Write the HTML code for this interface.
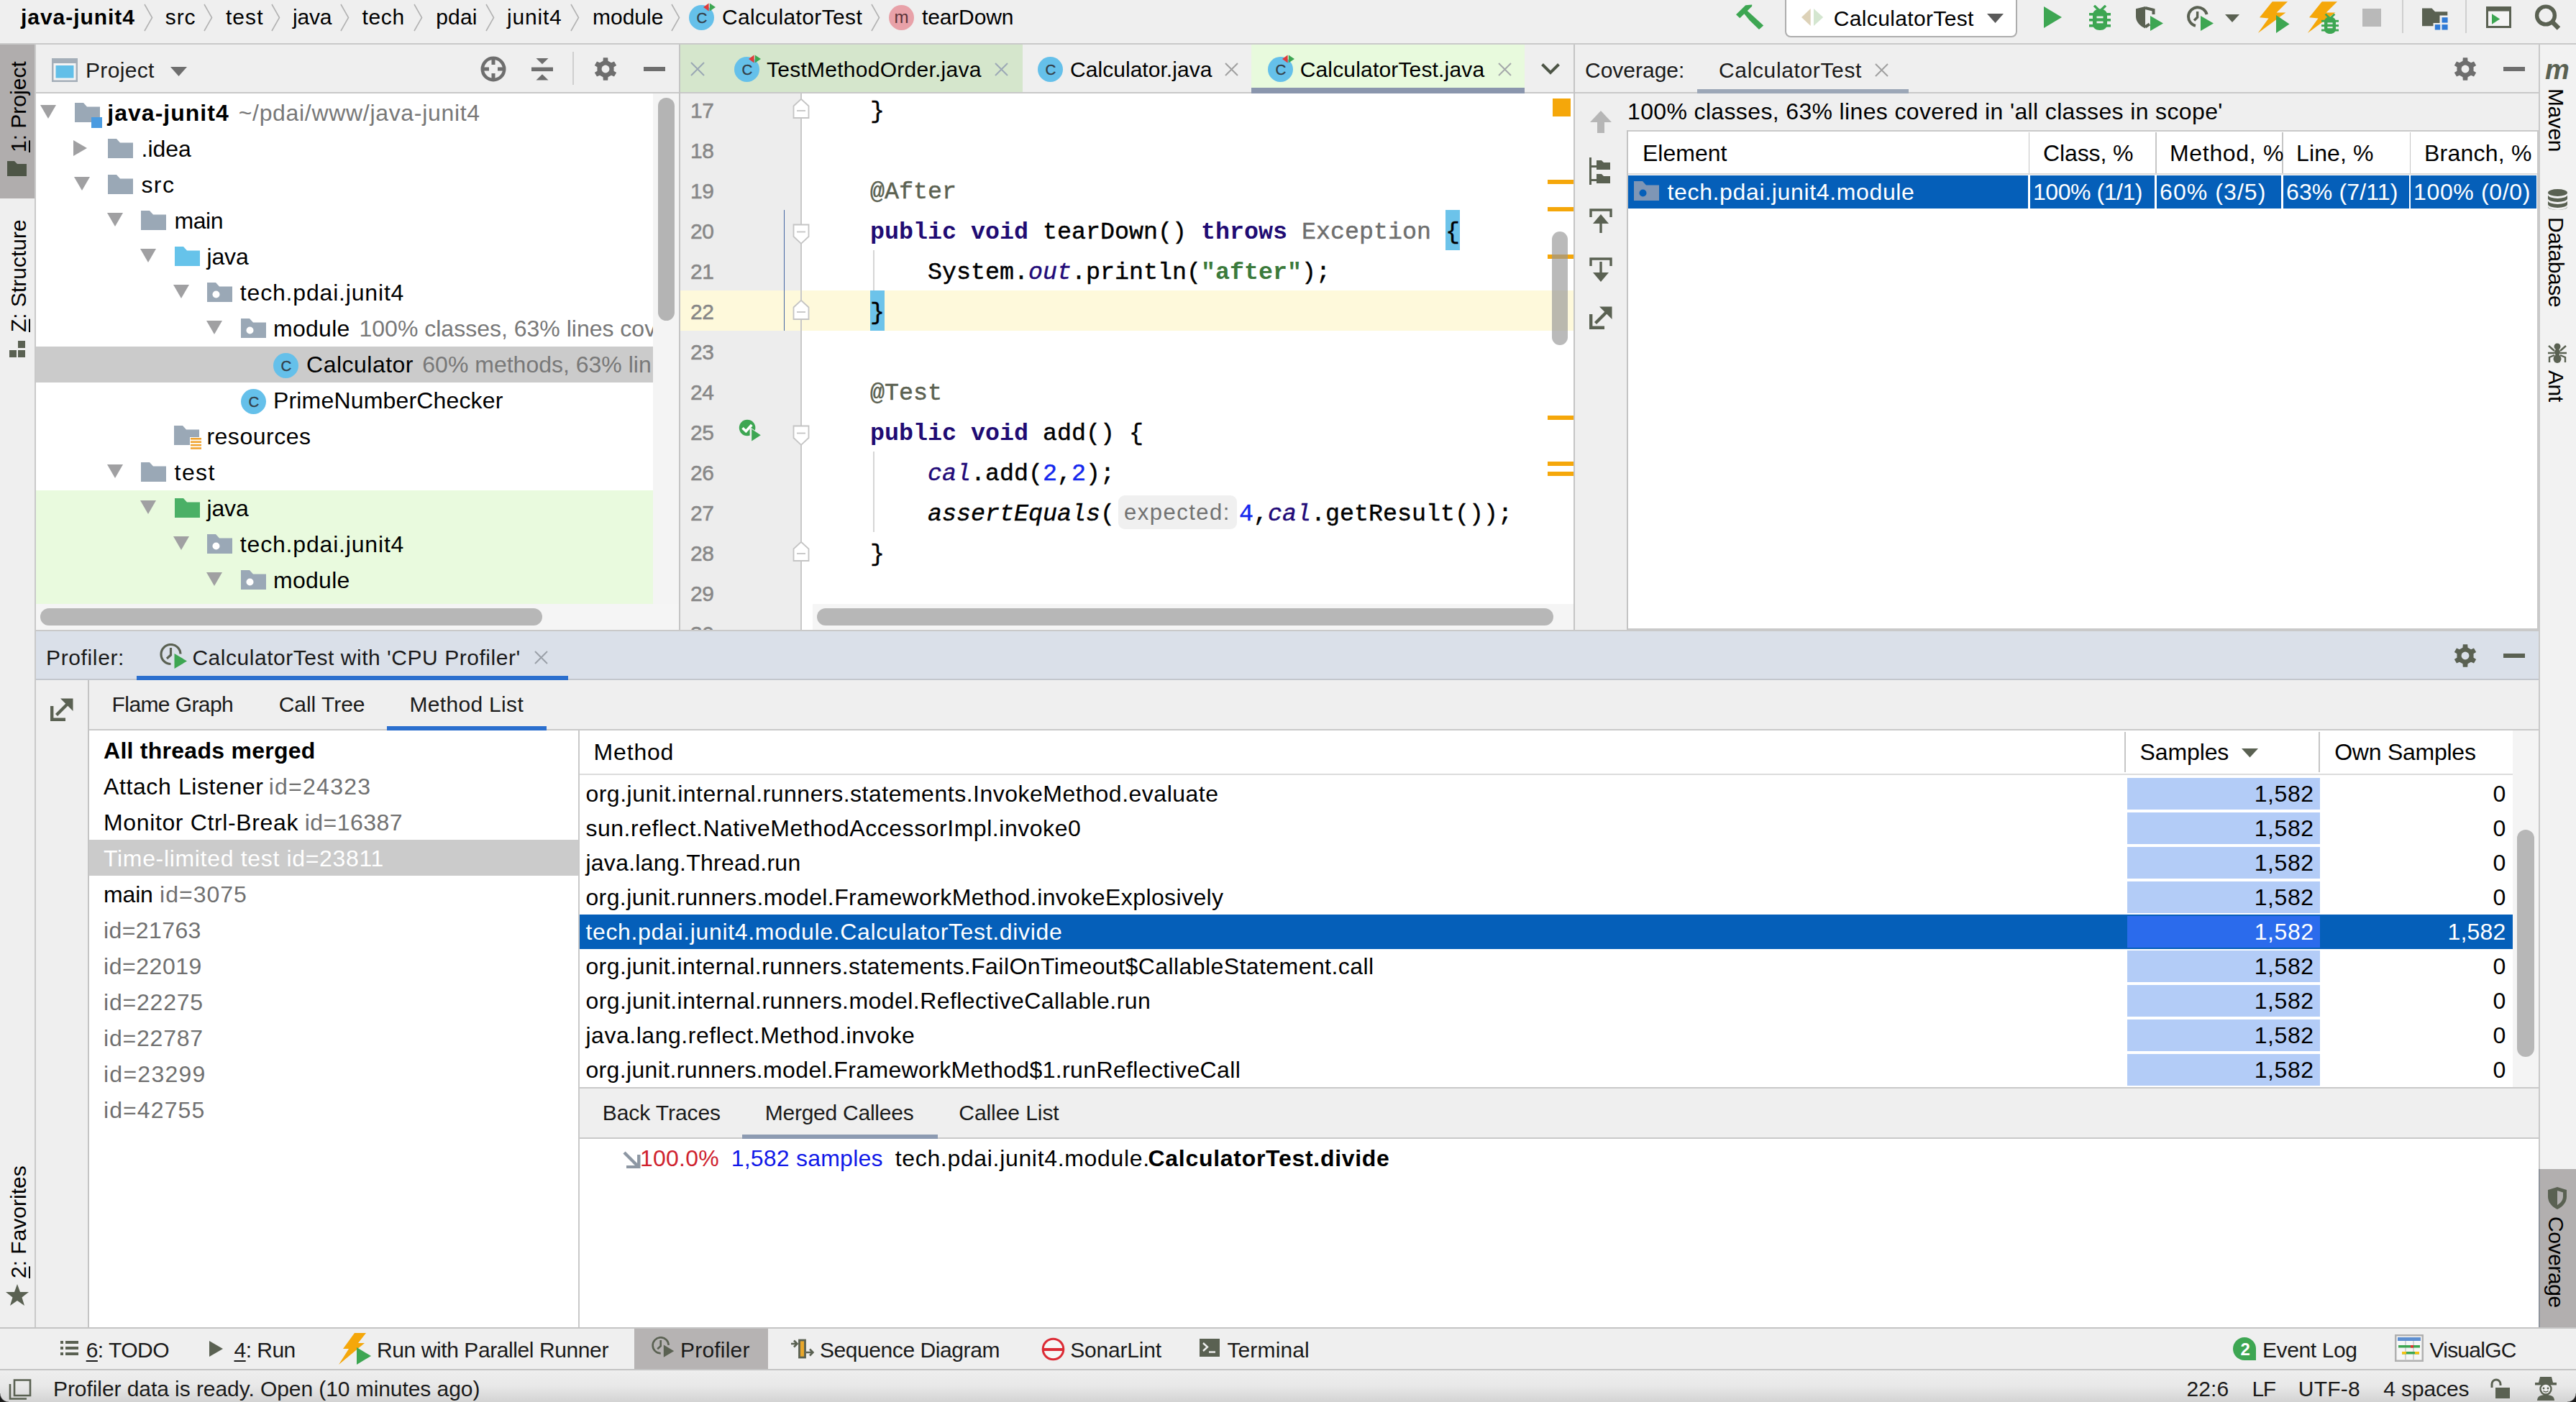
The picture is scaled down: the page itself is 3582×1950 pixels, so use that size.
<!DOCTYPE html>
<html><head><meta charset="utf-8"><title>java-junit4</title>
<style>
html,body{margin:0;padding:0;}
body{width:3582px;height:1950px;overflow:hidden;background:#efefef;position:relative;font-family:'Liberation Sans',sans-serif;}
#root{position:absolute;left:0;top:0;width:3582px;height:1950px;overflow:hidden;}
#root div,#root svg,#root span{position:absolute;}
#root span.t{white-space:pre;}
#root div.clip{overflow:hidden;}
#root u{text-decoration-thickness:1.6px;text-underline-offset:3.5px;}
</style></head><body><div id="root">
<div style="left:0px;top:0px;width:3582px;height:60px;background:#efefef;"></div>
<div style="left:0px;top:60px;width:3582px;height:2px;background:#c9c9c9;"></div>
<span class="t" style="top:8.61px;font:700 30px/30px 'Liberation Sans',sans-serif;color:#000;letter-spacing:0.953px;left:29.0px;">java-junit4</span>
<svg style="left:199.5px;top:5px;" width="13" height="40" viewBox="0 0 13 40"><path d="M1 1 L11.5 19.5 L1 38" stroke="#b2b2b2" stroke-width="1.6" fill="none"/></svg>
<svg style="left:283px;top:5px;" width="13" height="40" viewBox="0 0 13 40"><path d="M1 1 L11.5 19.5 L1 38" stroke="#b2b2b2" stroke-width="1.6" fill="none"/></svg>
<svg style="left:377.3px;top:5px;" width="13" height="40" viewBox="0 0 13 40"><path d="M1 1 L11.5 19.5 L1 38" stroke="#b2b2b2" stroke-width="1.6" fill="none"/></svg>
<svg style="left:472.8px;top:5px;" width="13" height="40" viewBox="0 0 13 40"><path d="M1 1 L11.5 19.5 L1 38" stroke="#b2b2b2" stroke-width="1.6" fill="none"/></svg>
<svg style="left:574.8px;top:5px;" width="13" height="40" viewBox="0 0 13 40"><path d="M1 1 L11.5 19.5 L1 38" stroke="#b2b2b2" stroke-width="1.6" fill="none"/></svg>
<svg style="left:674.8px;top:5px;" width="13" height="40" viewBox="0 0 13 40"><path d="M1 1 L11.5 19.5 L1 38" stroke="#b2b2b2" stroke-width="1.6" fill="none"/></svg>
<svg style="left:793.3px;top:5px;" width="13" height="40" viewBox="0 0 13 40"><path d="M1 1 L11.5 19.5 L1 38" stroke="#b2b2b2" stroke-width="1.6" fill="none"/></svg>
<svg style="left:933.2px;top:5px;" width="13" height="40" viewBox="0 0 13 40"><path d="M1 1 L11.5 19.5 L1 38" stroke="#b2b2b2" stroke-width="1.6" fill="none"/></svg>
<svg style="left:1211px;top:5px;" width="13" height="40" viewBox="0 0 13 40"><path d="M1 1 L11.5 19.5 L1 38" stroke="#b2b2b2" stroke-width="1.6" fill="none"/></svg>
<span class="t" style="top:8.61px;font:400 30px/30px 'Liberation Sans',sans-serif;color:#000;letter-spacing:0.950px;left:229.7px;">src</span>
<span class="t" style="top:8.61px;font:400 30px/30px 'Liberation Sans',sans-serif;color:#000;letter-spacing:1.080px;left:313.9px;">test</span>
<span class="t" style="top:8.61px;font:400 30px/30px 'Liberation Sans',sans-serif;color:#000;letter-spacing:-0.216px;left:407.0px;">java</span>
<span class="t" style="top:8.61px;font:400 30px/30px 'Liberation Sans',sans-serif;color:#000;letter-spacing:0.727px;left:503.4px;">tech</span>
<span class="t" style="top:8.61px;font:400 30px/30px 'Liberation Sans',sans-serif;color:#000;letter-spacing:0.127px;left:606.3px;">pdai</span>
<span class="t" style="top:8.61px;font:400 30px/30px 'Liberation Sans',sans-serif;color:#000;letter-spacing:0.816px;left:705.0px;">junit4</span>
<span class="t" style="top:8.61px;font:400 30px/30px 'Liberation Sans',sans-serif;color:#000;letter-spacing:-0.001px;left:824.0px;">module</span>
<span class="t" style="top:8.61px;font:400 30px/30px 'Liberation Sans',sans-serif;color:#000;letter-spacing:0.363px;left:1004.0px;">CalculatorTest</span>
<span class="t" style="top:8.61px;font:400 30px/30px 'Liberation Sans',sans-serif;color:#000;letter-spacing:-0.144px;left:1282.0px;">tearDown</span>
<svg style="left:958.4px;top:4px;" width="39" height="39" viewBox="0 0 39 39"><circle cx="17.5" cy="20.5" r="17.5" fill="#65c0ea"/><text x="17.8" y="27.7" text-anchor="middle" font-family="Liberation Sans,sans-serif" font-size="20.5" fill="#333d47" stroke="#333d47" stroke-width="0.35">C</text><path d="M27.6 0.6 L20 6 L27.6 11.4 Z" fill="#e03b3b"/><path d="M28.8 0.6 L37 6 L28.8 11.4 Z" fill="#3da652"/></svg>
<svg style="left:1236.3px;top:7px;" width="35" height="35" viewBox="0 0 35 35"><circle cx="17.5" cy="17.5" r="17.5" fill="#e8a1a8"/><text x="17.5" y="24.5" text-anchor="middle" font-family="Liberation Sans,sans-serif" font-size="24" fill="#5a3338">m</text></svg>
<svg style="left:2412px;top:5px;" width="42" height="38" viewBox="0 0 42 38"><path d="M2 15.2 L15.3 2.3 L24.2 1.5 V3.7 L7.3 20.3 Z" fill="#3da652"/><path d="M17.2 9.6 L40.2 30.4 L34 36 L21 23.6 L12.8 13.6 Z" fill="#3da652"/></svg>
<div style="left:2482px;top:-10px;width:323px;height:61.5px;background:#fff;border:2.2px solid #adadad;border-radius:8px;box-sizing:border-box;"></div>
<svg style="left:2505px;top:12px;" width="31" height="25" viewBox="0 0 31 25"><path d="M12.7 0 V24 L0 12 Z" fill="#ddd2b8"/><path d="M17 0 V24 L30.2 12 Z" fill="#d4e6d0"/></svg>
<span class="t" style="top:10.81px;font:400 30px/30px 'Liberation Sans',sans-serif;color:#000;letter-spacing:0.356px;left:2549.7px;">CalculatorTest</span>
<svg style="left:2763px;top:18.5px;" width="23" height="13" viewBox="0 0 23 13"><path d="M0 0 H23 L11.5 13 Z" fill="#5a5a5a"/></svg>
<svg style="left:2842px;top:9px;" width="25" height="30" viewBox="0 0 25 30"><path d="M0 0 L25 15 L0 30 Z" fill="#3da652"/></svg>
<svg style="left:2905px;top:6.6px;" width="30.0" height="35.0" viewBox="0 0 30 35"><g fill="#3da652"><path d="M5 14 C5 8.5 9 5.5 15 5.5 C21 5.5 25 8.5 25 14 V26.5 C25 32 21 35 15 35 C9 35 5 32 5 26.5 Z"/><rect x="0" y="11" width="30" height="3.6"/><rect x="0" y="19" width="30" height="3.6"/><rect x="0" y="27" width="30" height="3.6"/></g><path d="M7 0.8 L15 8.5 L23 0.8" stroke="#3da652" stroke-width="3.4" fill="none"/><rect x="10.5" y="15.6" width="9" height="2.7" fill="#efefef"/><rect x="10.5" y="22.6" width="9" height="2.7" fill="#efefef"/></svg>
<svg style="left:2969.5px;top:8.5px;" width="30" height="32" viewBox="0 0 30 32"><path d="M0 3.2 L13 0 V30.5 C5 27 0 21 0 14 Z" fill="#5a6152"/><path d="M13 2 L24.5 4.8 V11 M13 28.5 L19 24.5" stroke="#5a6152" stroke-width="4" fill="none"/></svg>
<svg style="left:2990px;top:22px;" width="18" height="21" viewBox="0 0 18 21"><path d="M0 0 L18 10.5 L0 21 Z" fill="#3da652"/></svg>
<svg style="left:3040px;top:7px;" width="32" height="32" viewBox="0 0 32 32"><path d="M28.6 13 A13 13 0 1 0 13 28.9" stroke="#5a6152" stroke-width="4" fill="none"/><path d="M15.6 9 V17 L11 21.5" stroke="#5a6152" stroke-width="3.4" fill="none"/></svg>
<svg style="left:3060px;top:22px;" width="18" height="21" viewBox="0 0 18 21"><path d="M0 0 L18 10.5 L0 21 Z" fill="#3da652"/></svg>
<svg style="left:3094px;top:20px;" width="20" height="11" viewBox="0 0 20 11"><path d="M0 0 H20 L10 11 Z" fill="#5a6152"/></svg>
<svg style="left:3139px;top:0px;" width="44" height="48" viewBox="0 0 44 48"><path d="M20.7 2.2 H42 L26.6 17.4 H39.4 L0.8 46 L15.5 25.4 L3 24.3 Z" fill="#f5a70a"/></svg>
<svg style="left:3165px;top:20.5px;" width="18.5" height="25" viewBox="0 0 18.5 25"><path d="M0 0 L18.5 12.5 L0 25 Z" fill="#3da652"/></svg>
<svg style="left:3207.5px;top:0px;" width="44" height="48" viewBox="0 0 44 48"><path d="M20.7 2.2 H42 L26.6 17.4 H39.4 L0.8 46 L15.5 25.4 L3 24.3 Z" fill="#f5a70a"/></svg>
<svg style="left:3228px;top:18.5px;" width="24.0" height="28.0" viewBox="0 0 30 35"><g fill="#3da652"><path d="M5 14 C5 8.5 9 5.5 15 5.5 C21 5.5 25 8.5 25 14 V26.5 C25 32 21 35 15 35 C9 35 5 32 5 26.5 Z"/><rect x="0" y="11" width="30" height="3.6"/><rect x="0" y="19" width="30" height="3.6"/><rect x="0" y="27" width="30" height="3.6"/></g><path d="M7 0.8 L15 8.5 L23 0.8" stroke="#3da652" stroke-width="3.4" fill="none"/><rect x="10.5" y="15.6" width="9" height="2.7" fill="#efefef"/><rect x="10.5" y="22.6" width="9" height="2.7" fill="#efefef"/></svg>
<div style="left:3285px;top:12px;width:26px;height:25px;background:#b9b9b9;"></div>
<div style="left:3340px;top:0px;width:2px;height:46px;background:#cfcfcf;"></div>
<svg style="left:3368px;top:11px;" width="37" height="32" viewBox="0 0 37 32"><path d="M0 0.6 H13.5 L18 5.3 H35.3 V10.5 H24.5 V21 H15.5 V25.3 H0 Z" fill="#5a6152"/><g fill="#2f7ad6"><rect x="27.5" y="13.2" width="8.1" height="7.4"/><rect x="17.8" y="23.1" width="7.4" height="7.4"/><rect x="27.5" y="23.1" width="8.1" height="7.4"/></g></svg>
<div style="left:3428px;top:0px;width:2px;height:46px;background:#cfcfcf;"></div>
<svg style="left:3456.5px;top:9px;" width="36" height="31" viewBox="0 0 36 31"><rect x="1.5" y="1.5" width="32" height="27" fill="#f4f4f4" stroke="#5a6152" stroke-width="3"/><rect x="0" y="0" width="35" height="6.6" fill="#5a6152"/><path d="M8 10.3 L19.2 17.5 L8 24.8 Z" fill="#3da652"/></svg>
<svg style="left:3523px;top:5px;" width="40" height="40" viewBox="0 0 40 40"><circle cx="17" cy="16.5" r="12.4" fill="none" stroke="#5a6152" stroke-width="5.4"/><path d="M25.5 25 L35 34.5" stroke="#5a6152" stroke-width="6.4"/></svg>
<div style="left:0px;top:62px;width:48px;height:1785px;background:#efefef;"></div>
<div style="left:48px;top:62px;width:2px;height:1785px;background:#c9c9c9;"></div>
<div style="left:0px;top:62px;width:48px;height:214px;background:#b0adad;"></div>
<span class="t" style="left:11.0px;top:212px;font:30px/30px 'Liberation Sans',sans-serif;color:#000;transform-origin:0 0;transform:rotate(-90deg);"><u>1</u>: Project</span>
<svg style="left:10px;top:224px;" width="27" height="21" viewBox="0 0 27 21"><path d="M0 0 H10 L14 4 H27 V21 H0 Z" fill="#4d5546"/></svg>
<span class="t" style="left:11.0px;top:462px;font:30px/30px 'Liberation Sans',sans-serif;color:#000;transform-origin:0 0;transform:rotate(-90deg);"><u>Z</u>: Structure</span>
<svg style="left:13px;top:474px;" width="22" height="23" viewBox="0 0 22 23"><g fill="#5a6152"><rect x="12" y="0" width="10" height="10"/><rect x="0" y="13" width="10" height="10"/><rect x="12" y="13" width="10" height="10"/></g></svg>
<span class="t" style="left:11.0px;top:1778px;font:30px/30px 'Liberation Sans',sans-serif;color:#000;transform-origin:0 0;transform:rotate(-90deg);"><u>2</u>: Favorites</span>
<svg style="left:8px;top:1786px;" width="32" height="31" viewBox="0 0 32 31"><path d="M16 0 L20 11 H32 L22.5 18.5 L26 30 L16 23 L6 30 L9.5 18.5 L0 11 H12 Z" fill="#5a6152"/></svg>
<div style="left:50px;top:62px;width:895px;height:66px;background:#efefef;"></div>
<div style="left:50px;top:128px;width:895px;height:2px;background:#c9c9c9;"></div>
<div style="left:50px;top:130px;width:895px;height:746px;background:#fff;"></div>
<svg style="left:72px;top:81px;" width="36" height="33" viewBox="0 0 36 33"><rect x="0" y="0" width="36" height="33" fill="#a4aeb8"/><rect x="2.5" y="7" width="31" height="23.5" fill="#f4f4f4"/><rect x="5.5" y="10" width="25" height="17.5" fill="#62bfe8"/></svg>
<span class="t" style="top:82.61px;font:400 30px/30px 'Liberation Sans',sans-serif;color:#1a1a1a;letter-spacing:0.338px;left:119.0px;">Project</span>
<svg style="left:237px;top:92.5px;" width="23" height="13" viewBox="0 0 23 13"><path d="M0 0 H23 L11.5 13 Z" fill="#6e6e6e"/></svg>
<svg style="left:668px;top:78px;" width="36" height="36" viewBox="0 0 36 36"><circle cx="18" cy="18" r="15.2" fill="none" stroke="#6e6e6e" stroke-width="4.6"/><path d="M18 2 V12 M18 24 V34 M2 18 H12 M24 18 H34" stroke="#6e6e6e" stroke-width="5"/></svg>
<svg style="left:739px;top:80.5px;" width="30" height="31" viewBox="0 0 30 31"><g fill="#6e6e6e"><path d="M6.5 0 H23.5 L15 8.3 Z"/><rect x="0" y="12.6" width="30" height="5.5"/><path d="M15 22.2 L23.5 30.5 H6.5 Z"/></g></svg>
<div style="left:796px;top:72px;width:2px;height:46px;background:#cfcfcf;"></div>
<svg style="left:825px;top:78.8px;" width="34" height="34" viewBox="0 0 34 34"><path d="M13.50 5.69 L13.82 1.32 L20.18 1.32 L20.50 5.69 L25.05 8.31 L28.99 6.41 L32.17 11.91 L28.55 14.37 L28.55 19.63 L32.17 22.09 L28.99 27.59 L25.05 25.69 L20.50 28.31 L20.18 32.68 L13.82 32.68 L13.50 28.31 L8.95 25.69 L5.01 27.59 L1.83 22.09 L5.45 19.63 L5.45 14.37 L1.83 11.91 L5.01 6.41 L8.95 8.31 Z" fill="#6e6e6e"/><circle cx="17" cy="17" r="9.92" fill="#6e6e6e"/><circle cx="17" cy="17" r="5.44" fill="#efefef"/></svg>
<div style="left:895px;top:93px;width:30px;height:5.5px;background:#6e6e6e;"></div>
<div style="left:50px;top:482px;width:858px;height:50px;background:#cbcbcb;"></div>
<div style="left:50px;top:681.5px;width:858px;height:158.5px;background:#e9fade;"></div>
<svg style="left:56.4px;top:146px;" width="22" height="19" viewBox="0 0 22 19"><path d="M0 0 H22 L11.0 19 Z" fill="#a0a0a2"/></svg>
<svg style="left:104px;top:143px;" width="35" height="27" viewBox="0 0 35 27"><path d="M0 0 H12 L17 5.5 H35 V27 H0 Z" fill="#9aa8b6"/></svg>
<div style="left:127px;top:163px;width:15px;height:15px;background:#4a9be0;"></div>
<span class="t" style="top:140.91px;font:700 32px/32px 'Liberation Sans',sans-serif;color:#000;letter-spacing:1.013px;left:149.3px;">java-junit4</span>
<span class="t" style="top:140.91px;font:400 32px/32px 'Liberation Sans',sans-serif;color:#787878;letter-spacing:0.683px;left:331.7px;">~/pdai/www/java-junit4</span>
<svg style="left:102.2px;top:195px;" width="19" height="22" viewBox="0 0 19 22"><path d="M0 0 L19 11.0 L0 22 Z" fill="#a0a0a2"/></svg>
<svg style="left:150.3px;top:193px;" width="35" height="27" viewBox="0 0 35 27"><path d="M0 0 H12 L17 5.5 H35 V27 H0 Z" fill="#9aa8b6"/></svg>
<span class="t" style="top:190.91px;font:400 32px/32px 'Liberation Sans',sans-serif;color:#000;letter-spacing:0.002px;left:196.5px;">.idea</span>
<svg style="left:102.6px;top:246px;" width="22" height="19" viewBox="0 0 22 19"><path d="M0 0 H22 L11.0 19 Z" fill="#a0a0a2"/></svg>
<svg style="left:150.3px;top:243px;" width="35" height="27" viewBox="0 0 35 27"><path d="M0 0 H12 L17 5.5 H35 V27 H0 Z" fill="#9aa8b6"/></svg>
<span class="t" style="top:240.91px;font:400 32px/32px 'Liberation Sans',sans-serif;color:#000;letter-spacing:1.372px;left:196.5px;">src</span>
<svg style="left:148.5px;top:296px;" width="22" height="19" viewBox="0 0 22 19"><path d="M0 0 H22 L11.0 19 Z" fill="#a0a0a2"/></svg>
<svg style="left:196.4px;top:293px;" width="35" height="27" viewBox="0 0 35 27"><path d="M0 0 H12 L17 5.5 H35 V27 H0 Z" fill="#9aa8b6"/></svg>
<span class="t" style="top:290.91px;font:400 32px/32px 'Liberation Sans',sans-serif;color:#000;letter-spacing:-0.486px;left:242.6px;">main</span>
<svg style="left:194.7px;top:346px;" width="22" height="19" viewBox="0 0 22 19"><path d="M0 0 H22 L11.0 19 Z" fill="#a0a0a2"/></svg>
<svg style="left:243px;top:343px;" width="35" height="27" viewBox="0 0 35 27"><path d="M0 0 H12 L17 5.5 H35 V27 H0 Z" fill="#66c3ea"/></svg>
<span class="t" style="top:340.91px;font:400 32px/32px 'Liberation Sans',sans-serif;color:#000;letter-spacing:-0.101px;left:287.4px;">java</span>
<svg style="left:241px;top:396px;" width="22" height="19" viewBox="0 0 22 19"><path d="M0 0 H22 L11.0 19 Z" fill="#a0a0a2"/></svg>
<svg style="left:288.4px;top:393px;" width="35" height="27" viewBox="0 0 35 27"><path d="M0 0 H12 L17 5.5 H35 V27 H0 Z" fill="#9aa8b6"/><circle cx="12.5" cy="16.5" r="5" fill="#fff"/></svg>
<span class="t" style="top:390.91px;font:400 32px/32px 'Liberation Sans',sans-serif;color:#000;letter-spacing:0.822px;left:333.8px;">tech.pdai.junit4</span>
<svg style="left:286.6px;top:446px;" width="22" height="19" viewBox="0 0 22 19"><path d="M0 0 H22 L11.0 19 Z" fill="#a0a0a2"/></svg>
<svg style="left:334.5px;top:443px;" width="35" height="27" viewBox="0 0 35 27"><path d="M0 0 H12 L17 5.5 H35 V27 H0 Z" fill="#9aa8b6"/><circle cx="12.5" cy="16.5" r="5" fill="#fff"/></svg>
<span class="t" style="top:440.91px;font:400 32px/32px 'Liberation Sans',sans-serif;color:#000;letter-spacing:0.289px;left:380.0px;">module</span>
<span class="t" style="top:440.91px;font:400 32px/32px 'Liberation Sans',sans-serif;color:#787878;left:499.5px;">100% classes, 63% lines cov</span>
<svg style="left:380.3px;top:487.5px;" width="39" height="39" viewBox="0 0 39 39"><circle cx="17.5" cy="20.5" r="17.5" fill="#65c0ea"/><text x="17.8" y="27.7" text-anchor="middle" font-family="Liberation Sans,sans-serif" font-size="20.5" fill="#333d47" stroke="#333d47" stroke-width="0.35">C</text></svg>
<span class="t" style="top:490.91px;font:400 32px/32px 'Liberation Sans',sans-serif;color:#000;letter-spacing:0.482px;left:426.1px;">Calculator</span>
<span class="t" style="top:490.91px;font:400 32px/32px 'Liberation Sans',sans-serif;color:#787878;left:587.3px;">60% methods, 63% lin</span>
<svg style="left:334.8px;top:537.5px;" width="39" height="39" viewBox="0 0 39 39"><circle cx="17.5" cy="20.5" r="17.5" fill="#65c0ea"/><text x="17.8" y="27.7" text-anchor="middle" font-family="Liberation Sans,sans-serif" font-size="20.5" fill="#333d47" stroke="#333d47" stroke-width="0.35">C</text></svg>
<span class="t" style="top:540.91px;font:400 32px/32px 'Liberation Sans',sans-serif;color:#000;letter-spacing:0.169px;left:380.0px;">PrimeNumberChecker</span>
<svg style="left:242px;top:592px;" width="35" height="27" viewBox="0 0 35 27"><path d="M0 0 H12 L17 5.5 H35 V27 H0 Z" fill="#9aa8b6"/></svg>
<svg style="left:264px;top:608px;" width="16" height="19" viewBox="0 0 16 19"><rect x="0" y="0" width="16" height="19" fill="#fff"/><g fill="#f1a431"><rect x="1" y="1" width="15" height="2.6"/><rect x="1" y="5.4" width="15" height="2.6"/><rect x="1" y="9.8" width="15" height="2.6"/><rect x="1" y="14.2" width="15" height="2.6"/></g></svg>
<span class="t" style="top:590.91px;font:400 32px/32px 'Liberation Sans',sans-serif;color:#000;letter-spacing:0.512px;left:287.4px;">resources</span>
<svg style="left:148.5px;top:646px;" width="22" height="19" viewBox="0 0 22 19"><path d="M0 0 H22 L11.0 19 Z" fill="#a0a0a2"/></svg>
<svg style="left:196.4px;top:643px;" width="35" height="27" viewBox="0 0 35 27"><path d="M0 0 H12 L17 5.5 H35 V27 H0 Z" fill="#9aa8b6"/></svg>
<span class="t" style="top:640.91px;font:400 32px/32px 'Liberation Sans',sans-serif;color:#000;letter-spacing:1.407px;left:242.6px;">test</span>
<svg style="left:194.7px;top:696px;" width="22" height="19" viewBox="0 0 22 19"><path d="M0 0 H22 L11.0 19 Z" fill="#a0a0a2"/></svg>
<svg style="left:243px;top:693px;" width="35" height="27" viewBox="0 0 35 27"><path d="M0 0 H12 L17 5.5 H35 V27 H0 Z" fill="#4bb066"/></svg>
<span class="t" style="top:690.91px;font:400 32px/32px 'Liberation Sans',sans-serif;color:#000;letter-spacing:-0.101px;left:287.4px;">java</span>
<svg style="left:241px;top:746px;" width="22" height="19" viewBox="0 0 22 19"><path d="M0 0 H22 L11.0 19 Z" fill="#a0a0a2"/></svg>
<svg style="left:288.4px;top:743px;" width="35" height="27" viewBox="0 0 35 27"><path d="M0 0 H12 L17 5.5 H35 V27 H0 Z" fill="#9aa8b6"/><circle cx="12.5" cy="16.5" r="5" fill="#fff"/></svg>
<span class="t" style="top:740.91px;font:400 32px/32px 'Liberation Sans',sans-serif;color:#000;letter-spacing:0.822px;left:333.8px;">tech.pdai.junit4</span>
<svg style="left:286.6px;top:796px;" width="22" height="19" viewBox="0 0 22 19"><path d="M0 0 H22 L11.0 19 Z" fill="#a0a0a2"/></svg>
<svg style="left:334.5px;top:793px;" width="35" height="27" viewBox="0 0 35 27"><path d="M0 0 H12 L17 5.5 H35 V27 H0 Z" fill="#9aa8b6"/><circle cx="12.5" cy="16.5" r="5" fill="#fff"/></svg>
<span class="t" style="top:790.91px;font:400 32px/32px 'Liberation Sans',sans-serif;color:#000;letter-spacing:0.289px;left:380.0px;">module</span>
<div style="left:908px;top:130px;width:36px;height:746px;background:#f4f4f4;"></div>
<div style="left:914.5px;top:136px;width:23px;height:310px;background:#b4b4b4;border-radius:12px;"></div>
<div style="left:50px;top:840px;width:895px;height:36px;background:#f5f5f5;"></div>
<div style="left:56px;top:846px;width:698px;height:23.5px;background:#b7b7b7;border-radius:12px;"></div>
<div style="left:944px;top:62px;width:2px;height:814px;background:#c4c4c4;"></div>
<div style="left:946px;top:62px;width:476px;height:66px;background:#d5e6cc;"></div>
<div style="left:1422px;top:62px;width:318px;height:66px;background:#efefef;"></div>
<div style="left:1740px;top:62px;width:380px;height:66px;background:#e8fadd;"></div>
<div style="left:2120px;top:62px;width:68px;height:66px;background:#efefef;"></div>
<div style="left:946px;top:128px;width:1242px;height:2px;background:#c9c9c9;"></div>
<div style="left:1740px;top:122px;width:380px;height:8px;background:#8a96ad;"></div>
<svg style="left:960px;top:86px;" width="20" height="20" viewBox="0 0 20 20"><path d="M1 1 L19 19 M19 1 L1 19" stroke="#9aa7b4" stroke-width="2" fill="none"/></svg>
<svg style="left:1020.6px;top:75.5px;" width="39" height="39" viewBox="0 0 39 39"><circle cx="17.5" cy="20.5" r="17.5" fill="#65c0ea"/><text x="17.8" y="27.7" text-anchor="middle" font-family="Liberation Sans,sans-serif" font-size="20.5" fill="#333d47" stroke="#333d47" stroke-width="0.35">C</text><path d="M27.6 0.6 L20 6 L27.6 11.4 Z" fill="#e03b3b"/><path d="M28.8 0.6 L37 6 L28.8 11.4 Z" fill="#3da652"/></svg>
<span class="t" style="top:81.61px;font:400 30px/30px 'Liberation Sans',sans-serif;color:#000;letter-spacing:0.259px;left:1066.0px;">TestMethodOrder.java</span>
<svg style="left:1382.5px;top:86.5px;" width="19.0" height="19.0" viewBox="0 0 19.0 19.0"><path d="M1 1 L18.0 18.0 M18.0 1 L1 18.0" stroke="#9ca8b6" stroke-width="2" fill="none"/></svg>
<svg style="left:1442.8px;top:75.5px;" width="39" height="39" viewBox="0 0 39 39"><circle cx="17.5" cy="20.5" r="17.5" fill="#65c0ea"/><text x="17.8" y="27.7" text-anchor="middle" font-family="Liberation Sans,sans-serif" font-size="20.5" fill="#333d47" stroke="#333d47" stroke-width="0.35">C</text></svg>
<span class="t" style="top:81.61px;font:400 30px/30px 'Liberation Sans',sans-serif;color:#000;letter-spacing:0.044px;left:1488.0px;">Calculator.java</span>
<svg style="left:1702.5px;top:86.5px;" width="19.0" height="19.0" viewBox="0 0 19.0 19.0"><path d="M1 1 L18.0 18.0 M18.0 1 L1 18.0" stroke="#a0a0a0" stroke-width="2" fill="none"/></svg>
<svg style="left:1762.6px;top:75.5px;" width="39" height="39" viewBox="0 0 39 39"><circle cx="17.5" cy="20.5" r="17.5" fill="#65c0ea"/><text x="17.8" y="27.7" text-anchor="middle" font-family="Liberation Sans,sans-serif" font-size="20.5" fill="#333d47" stroke="#333d47" stroke-width="0.35">C</text><path d="M27.6 0.6 L20 6 L27.6 11.4 Z" fill="#e03b3b"/><path d="M28.8 0.6 L37 6 L28.8 11.4 Z" fill="#3da652"/></svg>
<span class="t" style="top:81.61px;font:400 30px/30px 'Liberation Sans',sans-serif;color:#000;letter-spacing:0.164px;left:1807.7px;">CalculatorTest.java</span>
<svg style="left:2082.5px;top:86.5px;" width="19.0" height="19.0" viewBox="0 0 19.0 19.0"><path d="M1 1 L18.0 18.0 M18.0 1 L1 18.0" stroke="#a5a8ab" stroke-width="2" fill="none"/></svg>
<svg style="left:2142px;top:87px;" width="28" height="18" viewBox="0 0 28 18"><path d="M2.5 2.5 L14 14 L25.5 2.5" stroke="#4d5546" stroke-width="4" fill="none"/></svg>
<div style="left:946px;top:130px;width:168px;height:746px;background:#ededed;"></div>
<div style="left:1114px;top:130px;width:1074px;height:746px;background:#fff;"></div>
<div style="left:946px;top:404px;width:1242px;height:56px;background:#fef9db;"></div>
<div style="left:1113.3px;top:130px;width:1.6px;height:746px;background:#c8c8c8;"></div>
<div style="left:1089.6px;top:292px;width:1.9px;height:168px;background:#4667a3;"></div>
<span class="t" style="top:138.60px;font:400 30px/30px 'Liberation Sans',sans-serif;color:#878787;letter-spacing:-0.475px;left:960.0px;-webkit-text-stroke:0.5px #878787;">17</span>
<span class="t" style="top:194.60px;font:400 30px/30px 'Liberation Sans',sans-serif;color:#878787;letter-spacing:-0.475px;left:960.0px;-webkit-text-stroke:0.5px #878787;">18</span>
<span class="t" style="top:250.60px;font:400 30px/30px 'Liberation Sans',sans-serif;color:#878787;letter-spacing:-0.475px;left:960.0px;-webkit-text-stroke:0.5px #878787;">19</span>
<span class="t" style="top:306.61px;font:400 30px/30px 'Liberation Sans',sans-serif;color:#878787;letter-spacing:-0.475px;left:960.0px;-webkit-text-stroke:0.5px #878787;">20</span>
<span class="t" style="top:362.61px;font:400 30px/30px 'Liberation Sans',sans-serif;color:#878787;letter-spacing:-0.475px;left:960.0px;-webkit-text-stroke:0.5px #878787;">21</span>
<span class="t" style="top:418.61px;font:400 30px/30px 'Liberation Sans',sans-serif;color:#878787;letter-spacing:-0.475px;left:960.0px;-webkit-text-stroke:0.5px #878787;">22</span>
<span class="t" style="top:474.61px;font:400 30px/30px 'Liberation Sans',sans-serif;color:#878787;letter-spacing:-0.475px;left:960.0px;-webkit-text-stroke:0.5px #878787;">23</span>
<span class="t" style="top:530.61px;font:400 30px/30px 'Liberation Sans',sans-serif;color:#878787;letter-spacing:-0.475px;left:960.0px;-webkit-text-stroke:0.5px #878787;">24</span>
<span class="t" style="top:586.61px;font:400 30px/30px 'Liberation Sans',sans-serif;color:#878787;letter-spacing:-0.475px;left:960.0px;-webkit-text-stroke:0.5px #878787;">25</span>
<span class="t" style="top:642.61px;font:400 30px/30px 'Liberation Sans',sans-serif;color:#878787;letter-spacing:-0.475px;left:960.0px;-webkit-text-stroke:0.5px #878787;">26</span>
<span class="t" style="top:698.61px;font:400 30px/30px 'Liberation Sans',sans-serif;color:#878787;letter-spacing:-0.475px;left:960.0px;-webkit-text-stroke:0.5px #878787;">27</span>
<span class="t" style="top:754.61px;font:400 30px/30px 'Liberation Sans',sans-serif;color:#878787;letter-spacing:-0.475px;left:960.0px;-webkit-text-stroke:0.5px #878787;">28</span>
<span class="t" style="top:810.61px;font:400 30px/30px 'Liberation Sans',sans-serif;color:#878787;letter-spacing:-0.475px;left:960.0px;-webkit-text-stroke:0.5px #878787;">29</span>
<span class="t" style="top:866.61px;font:400 30px/30px 'Liberation Sans',sans-serif;color:#878787;letter-spacing:-0.475px;left:960.0px;-webkit-text-stroke:0.5px #878787;">30</span>
<svg style="left:1102px;top:136px;" width="24" height="30" viewBox="0 0 24 30"><path d="M1.5 28 V11.5 L12 1.8 L22.5 11.5 V28 Z" fill="#fff" stroke="#c4c4c4" stroke-width="1.8"/><path d="M6 18 H18" stroke="#c4c4c4" stroke-width="1.8"/></svg>
<svg style="left:1102px;top:416px;" width="24" height="30" viewBox="0 0 24 30"><path d="M1.5 28 V11.5 L12 1.8 L22.5 11.5 V28 Z" fill="#fff" stroke="#c4c4c4" stroke-width="1.8"/><path d="M6 18 H18" stroke="#c4c4c4" stroke-width="1.8"/></svg>
<svg style="left:1102px;top:752px;" width="24" height="30" viewBox="0 0 24 30"><path d="M1.5 28 V11.5 L12 1.8 L22.5 11.5 V28 Z" fill="#fff" stroke="#c4c4c4" stroke-width="1.8"/><path d="M6 18 H18" stroke="#c4c4c4" stroke-width="1.8"/></svg>
<svg style="left:1102px;top:310.5px;" width="24" height="30" viewBox="0 0 24 30"><path d="M1.5 1.5 V18 L12 27.8 L22.5 18 V1.5 Z" fill="#fff" stroke="#c4c4c4" stroke-width="1.8"/><path d="M6 11.5 H18" stroke="#c4c4c4" stroke-width="1.8"/></svg>
<svg style="left:1102px;top:590.5px;" width="24" height="30" viewBox="0 0 24 30"><path d="M1.5 1.5 V18 L12 27.8 L22.5 18 V1.5 Z" fill="#fff" stroke="#c4c4c4" stroke-width="1.8"/><path d="M6 11.5 H18" stroke="#c4c4c4" stroke-width="1.8"/></svg>
<svg style="left:1027px;top:583px;" width="33" height="32" viewBox="0 0 33 32"><circle cx="12.1" cy="12" r="11.3" fill="#3da652"/><path d="M5.5 12.3 L10.3 16.8 L18.3 8" stroke="#fff" stroke-width="3.6" fill="none"/><path d="M15.6 11 L33 22.2 L15.6 32 Z" fill="#ededed"/><path d="M18.2 13.8 L30.8 22.2 L18.2 30.6 Z" fill="#3da652"/></svg>
<div style="left:2010px;top:292px;width:20px;height:56px;background:#6cc3ea;"></div>
<div style="left:1210px;top:404px;width:20px;height:56px;background:#6cc3ea;"></div>
<div style="left:1214px;top:348px;width:1.6px;height:56px;background:#d6d6d6;"></div>
<div style="left:1214px;top:628px;width:1.6px;height:112px;background:#d6d6d6;"></div>
<span class="t" style="top:135.11px;font:400 33.33px/40px 'Liberation Mono',monospace;color:#000;left:1210px;-webkit-text-stroke:0.45px #000;">}</span>
<span class="t" style="top:247.11px;font:400 33.33px/40px 'Liberation Mono',monospace;color:#5b6151;left:1210px;-webkit-text-stroke:0.45px #5b6151;">@After</span>
<span class="t" style="top:303.11px;font:700 33.33px/40px 'Liberation Mono',monospace;color:#200b73;left:1210px;">public void</span>
<span class="t" style="top:303.11px;font:400 33.33px/40px 'Liberation Mono',monospace;color:#000;left:1430px;-webkit-text-stroke:0.45px #000;"> tearDown() </span>
<span class="t" style="top:303.11px;font:700 33.33px/40px 'Liberation Mono',monospace;color:#200b73;left:1670px;">throws</span>
<span class="t" style="top:303.11px;font:400 33.33px/40px 'Liberation Mono',monospace;color:#6e6e6e;left:1790px;-webkit-text-stroke:0.45px #6e6e6e;"> Exception</span>
<span class="t" style="top:303.11px;font:400 33.33px/40px 'Liberation Mono',monospace;color:#000;left:1990px;-webkit-text-stroke:0.45px #000;"> {</span>
<span class="t" style="top:359.11px;font:400 33.33px/40px 'Liberation Mono',monospace;color:#000;left:1290px;-webkit-text-stroke:0.45px #000;">System.</span>
<span class="t" style="top:359.11px;font:italic 400 33.33px/40px 'Liberation Mono',monospace;color:#210a78;left:1430px;-webkit-text-stroke:0.45px #210a78;">out</span>
<span class="t" style="top:359.11px;font:400 33.33px/40px 'Liberation Mono',monospace;color:#000;left:1490px;-webkit-text-stroke:0.45px #000;">.println(</span>
<span class="t" style="top:359.11px;font:700 33.33px/40px 'Liberation Mono',monospace;color:#3b7a3b;left:1670px;">&quot;after&quot;</span>
<span class="t" style="top:359.11px;font:400 33.33px/40px 'Liberation Mono',monospace;color:#000;left:1810px;-webkit-text-stroke:0.45px #000;">);</span>
<span class="t" style="top:415.11px;font:400 33.33px/40px 'Liberation Mono',monospace;color:#000;left:1210px;-webkit-text-stroke:0.45px #000;">}</span>
<span class="t" style="top:527.11px;font:400 33.33px/40px 'Liberation Mono',monospace;color:#5b6151;left:1210px;-webkit-text-stroke:0.45px #5b6151;">@Test</span>
<span class="t" style="top:583.11px;font:700 33.33px/40px 'Liberation Mono',monospace;color:#200b73;left:1210px;">public void</span>
<span class="t" style="top:583.11px;font:400 33.33px/40px 'Liberation Mono',monospace;color:#000;left:1430px;-webkit-text-stroke:0.45px #000;"> add() {</span>
<span class="t" style="top:639.11px;font:italic 400 33.33px/40px 'Liberation Mono',monospace;color:#210a78;left:1290px;-webkit-text-stroke:0.45px #210a78;">cal</span>
<span class="t" style="top:639.11px;font:400 33.33px/40px 'Liberation Mono',monospace;color:#000;left:1350px;-webkit-text-stroke:0.45px #000;">.add(</span>
<span class="t" style="top:639.11px;font:400 33.33px/40px 'Liberation Mono',monospace;color:#1428ee;left:1450px;-webkit-text-stroke:0.45px #1428ee;">2</span>
<span class="t" style="top:639.11px;font:400 33.33px/40px 'Liberation Mono',monospace;color:#000;left:1470px;-webkit-text-stroke:0.45px #000;">,</span>
<span class="t" style="top:639.11px;font:400 33.33px/40px 'Liberation Mono',monospace;color:#1428ee;left:1490px;-webkit-text-stroke:0.45px #1428ee;">2</span>
<span class="t" style="top:639.11px;font:400 33.33px/40px 'Liberation Mono',monospace;color:#000;left:1510px;-webkit-text-stroke:0.45px #000;">);</span>
<span class="t" style="top:695.11px;font:italic 400 33.33px/40px 'Liberation Mono',monospace;color:#000;left:1290px;-webkit-text-stroke:0.45px #000;">assertEquals</span>
<span class="t" style="top:695.11px;font:400 33.33px/40px 'Liberation Mono',monospace;color:#000;left:1530px;-webkit-text-stroke:0.45px #000;">(</span>
<div style="left:1554.5px;top:688.5px;width:165px;height:47px;background:#f0f0f0;border-radius:9px;"></div>
<span class="t" style="top:696.76px;font:400 31px/31px 'Liberation Sans',sans-serif;color:#727272;letter-spacing:1.495px;left:1563.0px;">expected:</span>
<span class="t" style="top:695.11px;font:400 33.33px/40px 'Liberation Mono',monospace;color:#1428ee;left:1723px;-webkit-text-stroke:0.45px #1428ee;">4</span>
<span class="t" style="top:695.11px;font:400 33.33px/40px 'Liberation Mono',monospace;color:#000;left:1743px;-webkit-text-stroke:0.45px #000;">,</span>
<span class="t" style="top:695.11px;font:italic 400 33.33px/40px 'Liberation Mono',monospace;color:#210a78;left:1763px;-webkit-text-stroke:0.45px #210a78;">cal</span>
<span class="t" style="top:695.11px;font:400 33.33px/40px 'Liberation Mono',monospace;color:#000;left:1823px;-webkit-text-stroke:0.45px #000;">.getResult());</span>
<span class="t" style="top:751.11px;font:400 33.33px/40px 'Liberation Mono',monospace;color:#000;left:1210px;-webkit-text-stroke:0.45px #000;">}</span>
<div style="left:1130px;top:840px;width:1058px;height:36px;background:#f5f5f5;"></div>
<div style="left:1136px;top:846px;width:1024px;height:23.5px;background:#b7b7b7;border-radius:12px;"></div>
<div style="left:2158.5px;top:136.5px;width:25.5px;height:25.5px;background:#f5a70a;"></div>
<div style="left:2152px;top:250px;width:36px;height:6px;background:#f5a70a;"></div>
<div style="left:2152px;top:288px;width:36px;height:6px;background:#f5a70a;"></div>
<div style="left:2152px;top:354px;width:36px;height:6px;background:#f5a70a;"></div>
<div style="left:2152px;top:578px;width:36px;height:6px;background:#f5a70a;"></div>
<div style="left:2152px;top:642px;width:36px;height:6px;background:#f5a70a;"></div>
<div style="left:2152px;top:656px;width:36px;height:6px;background:#f5a70a;"></div>
<div style="left:2158px;top:322px;width:22px;height:158px;background:rgba(150,150,150,0.66);border-radius:11px;"></div>
<div style="left:946px;top:876px;width:1242px;height:2px;background:#c9c9c9;"></div>
<div style="left:2188px;top:62px;width:2px;height:814px;background:#c4c4c4;"></div>
<div style="left:2190px;top:62px;width:1340px;height:66px;background:#efefef;"></div>
<div style="left:2190px;top:128px;width:1340px;height:2px;background:#c9c9c9;"></div>
<span class="t" style="top:82.61px;font:400 30px/30px 'Liberation Sans',sans-serif;color:#1a1a1a;letter-spacing:-0.003px;left:2204.0px;">Coverage:</span>
<span class="t" style="top:82.61px;font:400 30px/30px 'Liberation Sans',sans-serif;color:#1a1a1a;letter-spacing:0.640px;left:2390.0px;">CalculatorTest</span>
<svg style="left:2606.5px;top:87.5px;" width="19.0" height="19.0" viewBox="0 0 19.0 19.0"><path d="M1 1 L18.0 18.0 M18.0 1 L1 18.0" stroke="#a0a0a0" stroke-width="2" fill="none"/></svg>
<div style="left:2360px;top:124px;width:294px;height:6px;background:#9ca7b7;"></div>
<svg style="left:3410.5px;top:78.8px;" width="34" height="34" viewBox="0 0 34 34"><path d="M13.50 5.69 L13.82 1.32 L20.18 1.32 L20.50 5.69 L25.05 8.31 L28.99 6.41 L32.17 11.91 L28.55 14.37 L28.55 19.63 L32.17 22.09 L28.99 27.59 L25.05 25.69 L20.50 28.31 L20.18 32.68 L13.82 32.68 L13.50 28.31 L8.95 25.69 L5.01 27.59 L1.83 22.09 L5.45 19.63 L5.45 14.37 L1.83 11.91 L5.01 6.41 L8.95 8.31 Z" fill="#6e6e6e"/><circle cx="17" cy="17" r="9.92" fill="#6e6e6e"/><circle cx="17" cy="17" r="5.44" fill="#efefef"/></svg>
<div style="left:3481px;top:93px;width:30px;height:5.5px;background:#6e6e6e;"></div>
<div style="left:2190px;top:130px;width:72px;height:746px;background:#efefef;"></div>
<div style="left:2262px;top:181px;width:2px;height:695px;background:#c4c4c4;"></div>
<svg style="left:2210px;top:154px;" width="32" height="32" viewBox="0 0 32 32"><path d="M16 0 L31 16 H21 V31 H11 V16 H1 Z" fill="#b6b6b6"/></svg>
<svg style="left:2210px;top:219px;" width="30" height="38" viewBox="0 0 30 38"><g fill="#5a6152"><rect x="0" y="0" width="3" height="38"/><rect x="0" y="11" width="12" height="3"/><rect x="0" y="30" width="12" height="3"/><path d="M10 4 H17 L20 7 H29 V17 H10 Z"/><path d="M10 23 H17 L20 26 H29 V36 H10 Z"/></g></svg>
<svg style="left:2210px;top:290px;" width="32" height="34" viewBox="0 0 32 34"><g fill="none" stroke="#5a6152" stroke-width="3.4"><path d="M2 12 V2 H30 V12"/><path d="M16 34 V13"/></g><path d="M16 8 L27 21 H5 Z" fill="#5a6152"/></svg>
<svg style="left:2210px;top:358px;" width="32" height="34" viewBox="0 0 32 34"><g fill="none" stroke="#5a6152" stroke-width="3.4"><path d="M2 12 V2 H30 V12"/><path d="M16 6 V24"/></g><path d="M16 34 L27 21 H5 Z" fill="#5a6152"/></svg>
<svg style="left:2210px;top:426px;" width="32" height="32" viewBox="0 0 32 32"><g fill="none" stroke="#5a6152" stroke-width="4.4"><path d="M2.2 11 V29.8 H21"/><path d="M8.5 23.5 L26 6"/></g><path d="M14 0.5 H31.5 V18 Z" fill="#5a6152"/></svg>
<span class="t" style="top:138.91px;font:400 32px/32px 'Liberation Sans',sans-serif;color:#000;letter-spacing:0.359px;left:2263.0px;">100% classes, 63% lines covered in &#x27;all classes in scope&#x27;</span>
<div style="left:2264px;top:181px;width:1264px;height:2px;background:#c9c9c9;"></div>
<div style="left:2264px;top:183px;width:1264px;height:691px;background:#fff;"></div>
<div style="left:2264px;top:241px;width:1264px;height:2px;background:#d9d9d9;"></div>
<div style="left:2264px;top:874px;width:1266px;height:2px;background:#c9c9c9;"></div>
<div style="left:3528px;top:181px;width:2px;height:695px;background:#c9c9c9;"></div>
<div style="left:2820.5px;top:184px;width:1.6px;height:57px;background:#c6c6c6;"></div>
<div style="left:2997px;top:184px;width:1.6px;height:57px;background:#c6c6c6;"></div>
<div style="left:3173px;top:184px;width:1.6px;height:57px;background:#c6c6c6;"></div>
<div style="left:3350.5px;top:184px;width:1.6px;height:57px;background:#c6c6c6;"></div>
<span class="t" style="top:196.91px;font:400 32px/32px 'Liberation Sans',sans-serif;color:#000;letter-spacing:0.002px;left:2284.0px;">Element</span>
<span class="t" style="top:196.91px;font:400 32px/32px 'Liberation Sans',sans-serif;color:#000;letter-spacing:-0.121px;left:2841.0px;">Class, %</span>
<span class="t" style="top:196.91px;font:400 32px/32px 'Liberation Sans',sans-serif;color:#000;letter-spacing:0.679px;left:3017.0px;">Method, %</span>
<span class="t" style="top:196.91px;font:400 32px/32px 'Liberation Sans',sans-serif;color:#000;letter-spacing:0.111px;left:3193.0px;">Line, %</span>
<span class="t" style="top:196.91px;font:400 32px/32px 'Liberation Sans',sans-serif;color:#000;letter-spacing:0.222px;left:3371.0px;">Branch, %</span>
<div style="left:2264px;top:243.6px;width:556px;height:46.4px;background:#055fb9;"></div>
<div style="left:2822.5px;top:243.6px;width:173.5px;height:46.4px;background:#055fb9;"></div>
<div style="left:2998.5px;top:243.6px;width:173.5px;height:46.4px;background:#055fb9;"></div>
<div style="left:3174.5px;top:243.6px;width:175px;height:46.4px;background:#055fb9;"></div>
<div style="left:3352px;top:243.6px;width:174.5px;height:46.4px;background:#055fb9;"></div>
<svg style="left:2272px;top:252px;" width="35" height="27" viewBox="0 0 35 27"><path d="M0 0 H12 L17 5.5 H35 V27 H0 Z" fill="#7f96b5"/><circle cx="12.5" cy="16.5" r="5" fill="#055fb9"/></svg>
<span class="t" style="top:250.91px;font:400 32px/32px 'Liberation Sans',sans-serif;color:#fff;letter-spacing:0.650px;left:2318.5px;">tech.pdai.junit4.module</span>
<span class="t" style="top:250.91px;font:400 32px/32px 'Liberation Sans',sans-serif;color:#fff;letter-spacing:-0.459px;left:2827.0px;">100% (1/1)</span>
<span class="t" style="top:250.91px;font:400 32px/32px 'Liberation Sans',sans-serif;color:#fff;letter-spacing:1.083px;left:3003.0px;">60% (3/5)</span>
<span class="t" style="top:250.91px;font:400 32px/32px 'Liberation Sans',sans-serif;color:#fff;letter-spacing:0.138px;left:3179.0px;">63% (7/11)</span>
<span class="t" style="top:250.91px;font:400 32px/32px 'Liberation Sans',sans-serif;color:#fff;letter-spacing:0.652px;left:3356.0px;">100% (0/0)</span>
<div style="left:3530px;top:62px;width:2px;height:1785px;background:#c9c9c9;"></div>
<div style="left:3532px;top:62px;width:50px;height:1785px;background:#f2f2f2;"></div>
<span class="t" style="top:77.83px;font:italic 700 38px/38px 'Liberation Sans',sans-serif;color:#5a6152;left:3539.0px;">m</span>
<span class="t" style="left:3568.5px;top:122.5px;font:30px/30px 'Liberation Sans',sans-serif;color:#000;letter-spacing:-0.4px;transform-origin:0 0;transform:rotate(90deg);">Maven</span>
<svg style="left:3543px;top:263px;" width="27" height="29" viewBox="0 0 27 29"><g fill="#5a6152"><ellipse cx="13.5" cy="5" rx="13.5" ry="5"/><path d="M0 8 A13.5 5 0 0 0 27 8 V13 A13.5 5 0 0 1 0 13 Z"/><path d="M0 16 A13.5 5 0 0 0 27 16 V21 A13.5 5 0 0 1 0 21 Z"/><path d="M0 24 A13.5 5 0 0 0 27 24 V25 A13.5 4 0 0 1 0 25 Z"/></g></svg>
<span class="t" style="left:3568.5px;top:301.5px;font:30px/30px 'Liberation Sans',sans-serif;color:#000;letter-spacing:-0.4px;transform-origin:0 0;transform:rotate(90deg);">Database</span>
<svg style="left:3543px;top:477px;" width="26" height="28" viewBox="0 0 26 28"><g fill="#5a6152"><circle cx="13" cy="5" r="4.5"/><ellipse cx="13" cy="13" rx="4" ry="4.5"/><ellipse cx="13" cy="22" rx="5.5" ry="6"/></g><g stroke="#5a6152" stroke-width="2.4" fill="none"><path d="M9 11 L1 4 M17 11 L25 4 M9 14 H0 M17 14 H26 M9 17 L2 20 V27 M17 17 L24 20 V27"/></g></svg>
<span class="t" style="left:3568.5px;top:514.5px;font:30px/30px 'Liberation Sans',sans-serif;color:#000;letter-spacing:-0.4px;transform-origin:0 0;transform:rotate(90deg);">Ant</span>
<div style="left:3530px;top:1626px;width:52px;height:221px;background:#b2afaf;"></div>
<div style="left:3530px;top:1626px;width:2px;height:221px;background:#8f949c;"></div>
<svg style="left:3543px;top:1651px;" width="26" height="31" viewBox="0 0 26 31"><path d="M0 4 L13 0 L26 4 V13 C26 21 21 27 13 31 C5 27 0 21 0 13 Z" fill="#5a6152"/><path d="M13 5 L21 7.5 V13 C21 18 18 22 13 25 Z" fill="#b2afaf"/></svg>
<span class="t" style="left:3568.5px;top:1691.5px;font:30px/30px 'Liberation Sans',sans-serif;color:#000;letter-spacing:-0.4px;transform-origin:0 0;transform:rotate(90deg);">Coverage</span>
<div style="left:50px;top:876px;width:3480px;height:2px;background:#c9c9c9;"></div>
<div style="left:50px;top:878px;width:3480px;height:66px;background:#dae0e9;"></div>
<div style="left:50px;top:944px;width:3480px;height:2px;background:#c3c7cd;"></div>
<span class="t" style="top:899.61px;font:400 30px/30px 'Liberation Sans',sans-serif;color:#1a1a1a;letter-spacing:0.630px;left:64.0px;">Profiler:</span>
<svg style="left:222px;top:895px;" width="38.0" height="36.0" viewBox="0 0 38 36"><path d="M29 14.5 A13.5 13.5 0 1 0 15.5 28.5" stroke="#5a6152" stroke-width="3.2" fill="none"/><path d="M15.5 6 V16 L10 21" stroke="#5a6152" stroke-width="3.2" fill="none"/><path d="M18 13 L38 24.5 L18 36 Z" fill="#dae0e9"/><path d="M20.5 14 L38 24.5 L20.5 35 Z" fill="#3da652"/></svg>
<span class="t" style="top:899.61px;font:400 30px/30px 'Liberation Sans',sans-serif;color:#1a1a1a;letter-spacing:0.531px;left:267.4px;">CalculatorTest with &#x27;CPU Profiler&#x27;</span>
<svg style="left:742.5px;top:904.5px;" width="19.0" height="19.0" viewBox="0 0 19.0 19.0"><path d="M1 1 L18.0 18.0 M18.0 1 L1 18.0" stroke="#9aa0a8" stroke-width="2" fill="none"/></svg>
<div style="left:190px;top:940px;width:600px;height:5.5px;background:#2b6fce;"></div>
<svg style="left:3411px;top:895px;" width="34" height="34" viewBox="0 0 34 34"><path d="M13.50 5.69 L13.82 1.32 L20.18 1.32 L20.50 5.69 L25.05 8.31 L28.99 6.41 L32.17 11.91 L28.55 14.37 L28.55 19.63 L32.17 22.09 L28.99 27.59 L25.05 25.69 L20.50 28.31 L20.18 32.68 L13.82 32.68 L13.50 28.31 L8.95 25.69 L5.01 27.59 L1.83 22.09 L5.45 19.63 L5.45 14.37 L1.83 11.91 L5.01 6.41 L8.95 8.31 Z" fill="#5a6152"/><circle cx="17" cy="17" r="9.92" fill="#5a6152"/><circle cx="17" cy="17" r="5.44" fill="#dae0e9"/></svg>
<div style="left:3481px;top:909px;width:30px;height:5.5px;background:#5a6152;"></div>
<div style="left:50px;top:946px;width:3480px;height:68px;background:#efefef;"></div>
<div style="left:124px;top:1014px;width:3406px;height:2px;background:#c9c9c9;"></div>
<div style="left:50px;top:1016px;width:72px;height:830px;background:#efefef;"></div>
<div style="left:122px;top:946px;width:2px;height:900px;background:#c4c4c4;"></div>
<svg style="left:70px;top:971px;" width="32" height="32" viewBox="0 0 32 32"><g fill="none" stroke="#5a6152" stroke-width="4.4"><path d="M2.2 11 V29.8 H21"/><path d="M8.5 23.5 L26 6"/></g><path d="M14 0.5 H31.5 V18 Z" fill="#5a6152"/></svg>
<span class="t" style="top:964.61px;font:400 30px/30px 'Liberation Sans',sans-serif;color:#1a1a1a;letter-spacing:-0.598px;left:155.6px;">Flame Graph</span>
<span class="t" style="top:964.61px;font:400 30px/30px 'Liberation Sans',sans-serif;color:#1a1a1a;letter-spacing:-0.031px;left:387.7px;">Call Tree</span>
<span class="t" style="top:964.61px;font:400 30px/30px 'Liberation Sans',sans-serif;color:#1a1a1a;letter-spacing:0.331px;left:569.4px;">Method List</span>
<div style="left:538px;top:1010px;width:222px;height:5.5px;background:#2b6fce;"></div>
<div style="left:124px;top:1016px;width:680px;height:830px;background:#fff;"></div>
<div style="left:804px;top:1016px;width:2px;height:830px;background:#c9c9c9;"></div>
<div style="left:124px;top:1168px;width:680px;height:50px;background:#cbcbcb;"></div>
<span class="t" style="top:1027.91px;font:700 32px/32px 'Liberation Sans',sans-serif;color:#000;letter-spacing:0.267px;left:144.0px;">All threads merged</span>
<span class="t" style="top:1077.91px;font:400 32px/32px 'Liberation Sans',sans-serif;color:#000;letter-spacing:0.610px;left:144.0px;">Attach Listener</span>
<span class="t" style="top:1077.91px;font:400 32px/32px 'Liberation Sans',sans-serif;color:#707070;letter-spacing:1.260px;left:373.7px;">id=24323</span>
<span class="t" style="top:1127.91px;font:400 32px/32px 'Liberation Sans',sans-serif;color:#000;letter-spacing:0.635px;left:144.0px;">Monitor Ctrl-Break</span>
<span class="t" style="top:1127.91px;font:400 32px/32px 'Liberation Sans',sans-serif;color:#707070;letter-spacing:0.475px;left:423.7px;">id=16387</span>
<span class="t" style="top:1177.91px;font:400 32px/32px 'Liberation Sans',sans-serif;color:#fff;letter-spacing:0.672px;left:144.0px;">Time-limited test id=23811</span>
<span class="t" style="top:1227.91px;font:400 32px/32px 'Liberation Sans',sans-serif;color:#000;letter-spacing:-0.153px;left:144.0px;">main</span>
<span class="t" style="top:1227.91px;font:400 32px/32px 'Liberation Sans',sans-serif;color:#707070;letter-spacing:1.020px;left:222.0px;">id=3075</span>
<span class="t" style="top:1277.91px;font:400 32px/32px 'Liberation Sans',sans-serif;color:#707070;letter-spacing:0.403px;left:144.0px;">id=21763</span>
<span class="t" style="top:1327.91px;font:400 32px/32px 'Liberation Sans',sans-serif;color:#707070;letter-spacing:0.546px;left:144.0px;">id=22019</span>
<span class="t" style="top:1377.91px;font:400 32px/32px 'Liberation Sans',sans-serif;color:#707070;letter-spacing:0.789px;left:144.0px;">id=22275</span>
<span class="t" style="top:1427.91px;font:400 32px/32px 'Liberation Sans',sans-serif;color:#707070;letter-spacing:0.789px;left:144.0px;">id=22787</span>
<span class="t" style="top:1477.91px;font:400 32px/32px 'Liberation Sans',sans-serif;color:#707070;letter-spacing:1.260px;left:144.0px;">id=23299</span>
<span class="t" style="top:1527.91px;font:400 32px/32px 'Liberation Sans',sans-serif;color:#707070;letter-spacing:1.089px;left:144.0px;">id=42755</span>
<div style="left:806px;top:1016px;width:2688px;height:496px;background:#fff;"></div>
<div style="left:3494px;top:1016px;width:36px;height:496px;background:#f4f4f4;"></div>
<div style="left:806px;top:1076px;width:2688px;height:2px;background:#dcdcdc;"></div>
<div style="left:2954px;top:1018px;width:1.6px;height:56px;background:#c6c6c6;"></div>
<div style="left:3224px;top:1018px;width:1.6px;height:56px;background:#c6c6c6;"></div>
<span class="t" style="top:1030.41px;font:400 32px/32px 'Liberation Sans',sans-serif;color:#000;letter-spacing:0.813px;left:825.6px;">Method</span>
<span class="t" style="top:1030.41px;font:400 32px/32px 'Liberation Sans',sans-serif;color:#000;letter-spacing:-0.133px;left:2975.6px;">Samples</span>
<svg style="left:3116.5px;top:1041px;" width="23" height="12.5" viewBox="0 0 23 12.5"><path d="M0 0 H23 L11.5 12.5 Z" fill="#5a6152"/></svg>
<span class="t" style="top:1030.41px;font:400 32px/32px 'Liberation Sans',sans-serif;color:#000;letter-spacing:-0.249px;left:3246.2px;">Own Samples</span>
<div style="left:2958px;top:1082px;width:268px;height:43.5px;background:#b3ccf7;"></div>
<span class="t" style="top:1087.91px;font:400 32px/32px 'Liberation Sans',sans-serif;color:#000;letter-spacing:0.507px;left:814.4px;">org.junit.internal.runners.statements.InvokeMethod.evaluate</span>
<span class="t" style="top:1087.91px;font:400 32px/32px 'Liberation Sans',sans-serif;color:#000;letter-spacing:0.580px;left:3134.7px;">1,582</span>
<span class="t" style="top:1087.91px;font:400 32px/32px 'Liberation Sans',sans-serif;color:#000;left:3466.4px;">0</span>
<div style="left:2958px;top:1130px;width:268px;height:43.5px;background:#b3ccf7;"></div>
<span class="t" style="top:1135.91px;font:400 32px/32px 'Liberation Sans',sans-serif;color:#000;letter-spacing:0.540px;left:814.4px;">sun.reflect.NativeMethodAccessorImpl.invoke0</span>
<span class="t" style="top:1135.91px;font:400 32px/32px 'Liberation Sans',sans-serif;color:#000;letter-spacing:0.580px;left:3134.7px;">1,582</span>
<span class="t" style="top:1135.91px;font:400 32px/32px 'Liberation Sans',sans-serif;color:#000;left:3466.4px;">0</span>
<div style="left:2958px;top:1178px;width:268px;height:43.5px;background:#b3ccf7;"></div>
<span class="t" style="top:1183.91px;font:400 32px/32px 'Liberation Sans',sans-serif;color:#000;letter-spacing:0.278px;left:814.4px;">java.lang.Thread.run</span>
<span class="t" style="top:1183.91px;font:400 32px/32px 'Liberation Sans',sans-serif;color:#000;letter-spacing:0.580px;left:3134.7px;">1,582</span>
<span class="t" style="top:1183.91px;font:400 32px/32px 'Liberation Sans',sans-serif;color:#000;left:3466.4px;">0</span>
<div style="left:2958px;top:1226px;width:268px;height:43.5px;background:#b3ccf7;"></div>
<span class="t" style="top:1231.91px;font:400 32px/32px 'Liberation Sans',sans-serif;color:#000;letter-spacing:0.399px;left:814.4px;">org.junit.runners.model.FrameworkMethod.invokeExplosively</span>
<span class="t" style="top:1231.91px;font:400 32px/32px 'Liberation Sans',sans-serif;color:#000;letter-spacing:0.580px;left:3134.7px;">1,582</span>
<span class="t" style="top:1231.91px;font:400 32px/32px 'Liberation Sans',sans-serif;color:#000;left:3466.4px;">0</span>
<div style="left:806px;top:1264px;width:2688px;height:0px;background:#055fb9;"></div>
<div style="left:806px;top:1272px;width:2688px;height:48px;background:#055fb9;"></div>
<div style="left:2958px;top:1274px;width:268px;height:44px;background:#2b6bec;"></div>
<span class="t" style="top:1279.91px;font:400 32px/32px 'Liberation Sans',sans-serif;color:#fff;letter-spacing:0.662px;left:814.4px;">tech.pdai.junit4.module.CalculatorTest.divide</span>
<span class="t" style="top:1279.91px;font:400 32px/32px 'Liberation Sans',sans-serif;color:#fff;letter-spacing:0.580px;left:3134.7px;">1,582</span>
<span class="t" style="top:1279.91px;font:400 32px/32px 'Liberation Sans',sans-serif;color:#fff;letter-spacing:0.205px;left:3403.5px;">1,582</span>
<div style="left:2958px;top:1322px;width:268px;height:43.5px;background:#b3ccf7;"></div>
<span class="t" style="top:1327.91px;font:400 32px/32px 'Liberation Sans',sans-serif;color:#000;letter-spacing:0.431px;left:814.4px;">org.junit.internal.runners.statements.FailOnTimeout$CallableStatement.call</span>
<span class="t" style="top:1327.91px;font:400 32px/32px 'Liberation Sans',sans-serif;color:#000;letter-spacing:0.580px;left:3134.7px;">1,582</span>
<span class="t" style="top:1327.91px;font:400 32px/32px 'Liberation Sans',sans-serif;color:#000;left:3466.4px;">0</span>
<div style="left:2958px;top:1370px;width:268px;height:43.5px;background:#b3ccf7;"></div>
<span class="t" style="top:1375.91px;font:400 32px/32px 'Liberation Sans',sans-serif;color:#000;letter-spacing:0.447px;left:814.4px;">org.junit.internal.runners.model.ReflectiveCallable.run</span>
<span class="t" style="top:1375.91px;font:400 32px/32px 'Liberation Sans',sans-serif;color:#000;letter-spacing:0.580px;left:3134.7px;">1,582</span>
<span class="t" style="top:1375.91px;font:400 32px/32px 'Liberation Sans',sans-serif;color:#000;left:3466.4px;">0</span>
<div style="left:2958px;top:1418px;width:268px;height:43.5px;background:#b3ccf7;"></div>
<span class="t" style="top:1423.91px;font:400 32px/32px 'Liberation Sans',sans-serif;color:#000;letter-spacing:0.542px;left:814.4px;">java.lang.reflect.Method.invoke</span>
<span class="t" style="top:1423.91px;font:400 32px/32px 'Liberation Sans',sans-serif;color:#000;letter-spacing:0.580px;left:3134.7px;">1,582</span>
<span class="t" style="top:1423.91px;font:400 32px/32px 'Liberation Sans',sans-serif;color:#000;left:3466.4px;">0</span>
<div style="left:2958px;top:1466px;width:268px;height:43.5px;background:#b3ccf7;"></div>
<span class="t" style="top:1471.91px;font:400 32px/32px 'Liberation Sans',sans-serif;color:#000;letter-spacing:0.364px;left:814.4px;">org.junit.runners.model.FrameworkMethod$1.runReflectiveCall</span>
<span class="t" style="top:1471.91px;font:400 32px/32px 'Liberation Sans',sans-serif;color:#000;letter-spacing:0.580px;left:3134.7px;">1,582</span>
<span class="t" style="top:1471.91px;font:400 32px/32px 'Liberation Sans',sans-serif;color:#000;left:3466.4px;">0</span>
<div style="left:3500px;top:1154px;width:23.5px;height:316px;background:#b7b7b7;border-radius:12px;"></div>
<div style="left:806px;top:1512px;width:2724px;height:2px;background:#c9c9c9;"></div>
<div style="left:806px;top:1514px;width:2724px;height:68px;background:#efefef;"></div>
<div style="left:806px;top:1582px;width:2724px;height:2px;background:#c9c9c9;"></div>
<div style="left:806px;top:1584px;width:2724px;height:262px;background:#fff;"></div>
<span class="t" style="top:1533.11px;font:400 30px/30px 'Liberation Sans',sans-serif;color:#1a1a1a;letter-spacing:-0.066px;left:837.7px;">Back Traces</span>
<span class="t" style="top:1533.11px;font:400 30px/30px 'Liberation Sans',sans-serif;color:#1a1a1a;letter-spacing:-0.239px;left:1063.7px;">Merged Callees</span>
<span class="t" style="top:1533.11px;font:400 30px/30px 'Liberation Sans',sans-serif;color:#1a1a1a;letter-spacing:-0.068px;left:1333.3px;">Callee List</span>
<div style="left:1032px;top:1578px;width:271.5px;height:5.5px;background:#8d9bb2;"></div>
<svg style="left:866px;top:1601px;" width="25" height="24" viewBox="0 0 25 24"><path d="M2 2 L20 20" stroke="#8d97a3" stroke-width="4.4" fill="none"/><path d="M22.3 5 V22.3 H5" stroke="#8d97a3" stroke-width="4.4" fill="none"/></svg>
<span class="t" style="top:1594.91px;font:400 32px/32px 'Liberation Sans',sans-serif;color:#cf222e;letter-spacing:0.274px;left:889.9px;">100.0%</span>
<span class="t" style="top:1594.91px;font:400 32px/32px 'Liberation Sans',sans-serif;color:#1018e8;letter-spacing:0.223px;left:1016.7px;">1,582 samples</span>
<span class="t" style="top:1594.91px;font:400 32px/32px 'Liberation Sans',sans-serif;color:#000;letter-spacing:0.670px;left:1244.7px;">tech.pdai.junit4.module.</span>
<span class="t" style="top:1594.91px;font:700 32px/32px 'Liberation Sans',sans-serif;color:#000;letter-spacing:0.707px;left:1596.5px;">CalculatorTest.divide</span>
<div style="left:0px;top:1846px;width:3582px;height:2px;background:#c4c4c4;"></div>
<div style="left:0px;top:1848px;width:3582px;height:56px;background:#efefef;"></div>
<div style="left:0px;top:1904px;width:3582px;height:2px;background:#c4c4c4;"></div>
<div style="left:882px;top:1848px;width:186px;height:56px;background:#b6b3b3;"></div>
<svg style="left:84px;top:1865px;" width="25" height="20" viewBox="0 0 25 20"><g fill="#5a6152"><rect x="0" y="0" width="4" height="4"/><rect x="7" y="0" width="18" height="4"/><rect x="0" y="8" width="4" height="4"/><rect x="7" y="8" width="18" height="4"/><rect x="0" y="16" width="4" height="4"/><rect x="7" y="16" width="18" height="4"/></g></svg>
<span class="t" style="top:1863.11px;font:400 30px/30px 'Liberation Sans',sans-serif;color:#1a1a1a;letter-spacing:-0.523px;left:119.7px;"><u>6</u>: TODO</span>
<svg style="left:291px;top:1865px;" width="19" height="22" viewBox="0 0 19 22"><path d="M0 0 L19 11 L0 22 Z" fill="#5a6152"/></svg>
<span class="t" style="top:1863.11px;font:400 30px/30px 'Liberation Sans',sans-serif;color:#1a1a1a;letter-spacing:-0.521px;left:325.5px;"><u>4</u>: Run</span>
<svg style="left:471px;top:1854px;" width="45" height="44" viewBox="0 0 45 44"><path d="M22 0 H38 L27 14 H36 L0 44 L14 22 H6 Z" fill="#f5a70a"/><path d="M25 20 L45 32 L25 44 Z" fill="#3da652"/></svg>
<span class="t" style="top:1863.11px;font:400 30px/30px 'Liberation Sans',sans-serif;color:#1a1a1a;letter-spacing:-0.411px;left:524.0px;">Run with Parallel Runner</span>
<svg style="left:906px;top:1859px;" width="31.159999999999997" height="29.52" viewBox="0 0 38 36"><path d="M29 14.5 A13.5 13.5 0 1 0 15.5 28.5" stroke="#5a6152" stroke-width="3.2" fill="none"/><path d="M15.5 6 V16 L10 21" stroke="#5a6152" stroke-width="3.2" fill="none"/><path d="M18 13 L38 24.5 L18 36 Z" fill="#b6b3b3"/><path d="M20.5 14 L38 24.5 L20.5 35 Z" fill="#5a6152"/></svg>
<span class="t" style="top:1863.11px;font:400 30px/30px 'Liberation Sans',sans-serif;color:#1a1a1a;letter-spacing:0.196px;left:946.0px;">Profiler</span>
<svg style="left:1100px;top:1862px;" width="32" height="28" viewBox="0 0 32 28"><rect x="11.5" y="2" width="8" height="24" fill="#e8a72c" stroke="#5a6152" stroke-width="2.8"/><path d="M0 7 H8 M4 2.5 L8.5 7 L4 11.5" stroke="#5a6152" stroke-width="2.6" fill="none"/><path d="M21 19 H30 M26 14.5 L30.5 19 L26 23.5" stroke="#5a6152" stroke-width="2.6" fill="none"/></svg>
<span class="t" style="top:1863.11px;font:400 30px/30px 'Liberation Sans',sans-serif;color:#1a1a1a;letter-spacing:-0.429px;left:1140.0px;">Sequence Diagram</span>
<svg style="left:1448px;top:1860px;" width="33" height="33" viewBox="0 0 33 33"><circle cx="16.5" cy="16.5" r="14.3" fill="#f6f6f6" stroke="#dc2b35" stroke-width="3"/><path d="M3 17 H30" stroke="#dc2b35" stroke-width="4"/></svg>
<span class="t" style="top:1863.11px;font:400 30px/30px 'Liberation Sans',sans-serif;color:#1a1a1a;letter-spacing:-0.192px;left:1488.2px;">SonarLint</span>
<svg style="left:1668px;top:1862px;" width="28" height="25" viewBox="0 0 28 25"><rect x="0" y="0" width="28" height="25" fill="#5a6152"/><path d="M5 6 L11 11.5 L5 17" stroke="#efefef" stroke-width="2.4" fill="none"/><path d="M13 18.5 H22" stroke="#efefef" stroke-width="2.4"/></svg>
<span class="t" style="top:1863.11px;font:400 30px/30px 'Liberation Sans',sans-serif;color:#1a1a1a;letter-spacing:0.146px;left:1706.4px;">Terminal</span>
<svg style="left:3105px;top:1860px;" width="33" height="33" viewBox="0 0 33 33"><path d="M16 0 A16 16 0 1 0 16 32 H32 V16 A16 16 0 0 0 16 0 Z" fill="#3da652"/></svg>
<span class="t" style="top:1865.18px;font:700 24px/24px 'Liberation Sans',sans-serif;color:#fff;left:3115.5px;">2</span>
<span class="t" style="top:1863.11px;font:400 30px/30px 'Liberation Sans',sans-serif;color:#1a1a1a;letter-spacing:-0.389px;left:3146.0px;">Event Log</span>
<svg style="left:3330px;top:1856px;" width="40" height="38" viewBox="0 0 40 38"><rect x="0" y="0" width="40" height="38" fill="#b0b0b0"/><rect x="2.5" y="2.5" width="35" height="33" fill="#f6f6f6"/><rect x="4" y="4" width="32" height="5" fill="#5e8fd0"/><path d="M15 9 V35 M26 9 V35" stroke="#c8c8c8" stroke-width="1.5"/><rect x="5" y="15" width="30" height="3.5" fill="#3da652"/><rect x="10" y="24" width="24" height="3.5" fill="#3da652"/><rect x="22" y="15" width="4" height="3.5" fill="#e03030"/><rect x="10" y="24" width="6" height="3.5" fill="#f5c211"/><rect x="28" y="24" width="6" height="3.5" fill="#f5c211"/></svg>
<span class="t" style="top:1863.11px;font:400 30px/30px 'Liberation Sans',sans-serif;color:#1a1a1a;letter-spacing:-0.753px;left:3378.5px;">VisualGC</span>
<div style="left:0px;top:1906px;width:3582px;height:44px;background:linear-gradient(#eeeeee,#e8e8e8 50%,#d3d3d3);"></div>
<svg style="left:12px;top:1918px;" width="32" height="29" viewBox="0 0 32 29"><path d="M8 1.5 H30 V23 H8 Z" fill="none" stroke="#5a6152" stroke-width="2.6"/><path d="M2 7 V27.5 H25" fill="none" stroke="#5a6152" stroke-width="2.6"/></svg>
<span class="t" style="top:1917.11px;font:400 30px/30px 'Liberation Sans',sans-serif;color:#1a1a1a;letter-spacing:-0.069px;left:74.0px;">Profiler data is ready. Open (10 minutes ago)</span>
<span class="t" style="top:1917.11px;font:400 30px/30px 'Liberation Sans',sans-serif;color:#1a1a1a;letter-spacing:0.170px;left:3040.4px;">22:6</span>
<span class="t" style="top:1917.11px;font:400 30px/30px 'Liberation Sans',sans-serif;color:#1a1a1a;letter-spacing:-1.616px;left:3131.6px;">LF</span>
<span class="t" style="top:1917.11px;font:400 30px/30px 'Liberation Sans',sans-serif;color:#1a1a1a;letter-spacing:0.200px;left:3195.8px;">UTF-8</span>
<span class="t" style="top:1917.11px;font:400 30px/30px 'Liberation Sans',sans-serif;color:#1a1a1a;letter-spacing:-0.125px;left:3314.3px;">4 spaces</span>
<svg style="left:3461px;top:1917px;" width="30" height="29" viewBox="0 0 30 29"><path d="M4 13 V8 A6 6 0 0 1 16 8 V10" fill="none" stroke="#5a6152" stroke-width="3"/><rect x="9" y="13" width="20" height="15" fill="#5a6152"/></svg>
<svg style="left:3524px;top:1914px;" width="32" height="34" viewBox="0 0 32 34"><g fill="#5a6152"><path d="M8 1 H24 L26 9 H6 Z"/><rect x="1" y="9" width="30" height="3.5"/><path d="M4 34 C4 28 9 26 16 26 C23 26 28 28 28 34 Z"/></g><circle cx="16" cy="18" r="7.5" fill="#efefef" stroke="#5a6152" stroke-width="2.4"/><circle cx="13" cy="17" r="1.4" fill="#5a6152"/><circle cx="19" cy="17" r="1.4" fill="#5a6152"/><path d="M12.5 20.5 Q16 23.5 19.5 20.5" stroke="#5a6152" stroke-width="1.6" fill="none"/></svg>
<div style="left:0px;top:1938px;width:12px;height:12px;background:radial-gradient(circle at 100% 0, rgba(0,0,0,0) 11px, #1a1a1a 12.5px);"></div>
<div style="left:3570px;top:1938px;width:12px;height:12px;background:radial-gradient(circle at 0 0, rgba(0,0,0,0) 11px, #1a1a1a 12.5px);"></div>
</div></body></html>
